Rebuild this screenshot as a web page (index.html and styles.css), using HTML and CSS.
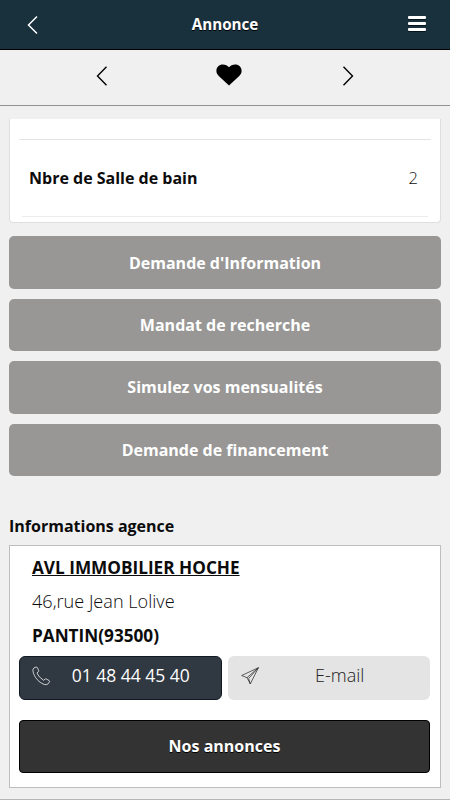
FILE: index.html
```html
<!DOCTYPE html>
<html lang="fr">
<head>
  <meta charset="UTF-8" />
  <meta name="viewport" content="width=device-width, initial-scale=1.0"/>
  <title>Annonce</title>
  <link rel="stylesheet" href="styles.css">
</head>
<body>
  <header class="header">
    <a class="back" href="#" aria-label="Retour">
      <svg width="12" height="20" viewBox="0 0 12 20"><path d="M10 1.5 L1.5 10 L10 18.5"/></svg>
    </a>
    <h1>Annonce</h1>
    <button class="menu" aria-label="Menu"><span></span><span></span><span></span></button>
  </header>

  <nav class="pager">
    <a href="#" aria-label="Annonce précédente">
      <svg width="12" height="20" viewBox="0 0 12 20"><path d="M10.5 0.7 L1.5 10 L10.5 19.3"/></svg>
    </a>
    <a class="heart" href="#" aria-label="Favori">
      <svg width="26" height="22" viewBox="0 0 26 22"><path d="M13 21.6 L3 12.2 C1 10.2 0.4 8.7 0.4 7 C0.4 3.1 3.2 0.5 6.8 0.5 C9.4 0.5 11.7 1.6 13 3.3 C14.3 1.6 16.6 0.5 19.2 0.5 C22.8 0.5 25.6 3.1 25.6 7 C25.6 8.7 25 10.2 23 12.2 Z"/></svg>
    </a>
    <a href="#" aria-label="Annonce suivante">
      <svg width="12" height="20" viewBox="0 0 12 20"><path d="M1.5 0.7 L10.5 10 L1.5 19.3"/></svg>
    </a>
  </nav>

  <main class="content">
    <section class="details">
      <div class="row">
        <span class="label">Nbre de Salle de bain</span>
        <span class="value">2</span>
      </div>
      <hr>
    </section>

    <div class="actions">
      <button class="action-btn">Demande d'Information</button>
      <button class="action-btn">Mandat de recherche</button>
      <button class="action-btn">Simulez vos mensualités</button>
      <button class="action-btn">Demande de financement</button>
    </div>

    <h2>Informations agence</h2>

    <section class="agency">
      <div class="address">
        <a class="name" href="#">AVL IMMOBILIER HOCHE</a>
        <span class="street">46,rue Jean Lolive</span>
        <span class="city">PANTIN(93500)</span>
      </div>
      <div class="contact">
        <a class="contact-btn phone" href="#">
          <svg width="19" height="20" viewBox="0 0 20 20"><path d="M2.2 1.4 L4.3 0.6 Q5.2 0.4 5.7 1.3 L7 4.1 Q7.3 5 6.6 5.6 L5.2 6.8 Q6.6 11 12.3 14.6 L13.7 13.3 Q14.4 12.8 15.2 13.2 L18 14.8 Q18.8 15.4 18.3 16.3 L17 18.2 Q15.7 19.5 13.5 19 C7.8 17.5 2.1 11.3 1 5 Q0.7 2.5 2.2 1.4 Z"/></svg>
          <span>01 48 44 45 40</span>
        </a>
        <a class="contact-btn mail" href="#">
          <svg width="18" height="18" viewBox="0 0 18 18"><path d="M17.4 0.7 L0.7 8.5 L6 10.7 L9.3 16.9 Z M17.4 0.7 L6 10.7 M17.4 0.7 L7.6 11.5 L9.3 16.9"/></svg>
          <span>E-mail</span>
        </a>
      </div>
      <button class="listings-btn">Nos annonces</button>
    </section>
  </main>
  <footer class="footer"></footer>
</body>
</html>
```
FILE: styles.css
```css
* {
  box-sizing: border-box;
}

body {
  margin: 0;
  height: 800px;
  display: flex;
  flex-direction: column;
  overflow: hidden;
  font-family: 'Open Sans', 'Noto Sans', sans-serif;
  background-color: #f0f0f0;
  color: #0c0c0c;
}

a {
  color: inherit;
  text-decoration: none;
}

button {
  font-family: inherit;
  cursor: pointer;
}

svg {
  display: block;
  fill: none;
  stroke: currentColor;
}

.header {
  display: grid;
  grid-template-columns: 60px 1fr 60px;
  align-items: center;
  height: 50px;
  flex: none;
  background-color: #19303d;
  border-bottom: 1px solid #000;
  color: white;
}

.header h1 {
  margin: 0 0 2px;
  font-size: 15.2px;
  font-weight: 700;
  line-height: 20px;
  text-align: center;
  text-shadow: 0 1px 0 #000;
}

.back {
  padding-left: 27px;
}

.back svg {
  stroke-width: 1.5;
}

.menu {
  display: flex;
  flex-direction: column;
  gap: 3px;
  width: 18px;
  margin: 0 0 3px 18px;
  padding: 0;
  border: none;
  background: none;
}

.menu span {
  height: 3px;
  border-radius: 1px;
  background-color: white;
  box-shadow: 0 1px 0 #07131a;
}

.pager {
  display: flex;
  justify-content: space-between;
  align-items: center;
  height: 56px;
  flex: none;
  padding: 0 96px 4px;
  border-bottom: 1px solid #919191;
  color: #000;
}

.pager svg {
  stroke-width: 1.4;
}

.pager .heart svg {
  fill: #000;
  stroke: none;
  margin: 0 0 2px 8px;
}

.content {
  padding: 13px 9px 0;
}

.details {
  height: 104px;
  padding: 20px 9px 0;
  background-color: white;
  border: 1px solid #dedede;
  border-top: none;
  border-radius: 0 0 4px 4px;
}

.row {
  display: flex;
  justify-content: space-between;
  align-items: center;
  height: 77px;
  padding: 0 13px 1px 10px;
  border-top: 1px solid #e4e4e4;
  font-size: 16px;
}

.details hr {
  margin: 0 3px;
  border: none;
  border-top: 1px solid #ececec;
}

.label {
  font-weight: 700;
}

.value {
  font-size: 16.5px;
  font-weight: 300;
}

.actions {
  display: flex;
  flex-direction: column;
  gap: 10px;
  margin-top: 13.4px;
}

.action-btn {
  height: 52.4px;
  padding: 0;
  border: none;
  border-radius: 5px;
  background-color: #989795;
  color: white;
  font-size: 16px;
  font-weight: 700;
}

h2 {
  margin: 40px 0 8px;
  font-size: 16px;
  font-weight: 700;
  line-height: 21px;
}

.agency {
  height: 243.5px;
  padding: 5px 10px 0 9px;
  background-color: white;
  border: 1px solid #bebebe;
}

.address {
  display: flex;
  flex-direction: column;
  align-items: flex-start;
  padding-left: 13px;
  font-size: 17.2px;
  line-height: 33.8px;
}

.name,
.city {
  font-weight: 700;
}

.name {
  text-decoration: underline;
}

.street {
  font-size: 18.1px;
  font-weight: 300;
}

.contact {
  display: grid;
  grid-template-columns: 1fr 1fr;
  gap: 6px;
  margin-top: 3.6px;
}

.contact-btn {
  display: grid;
  grid-template-columns: 20px 1fr;
  align-items: center;
  height: 44px;
  padding: 0 11px 3px 12px;
  border-radius: 6px;
  font-size: 18px;
}

.contact-btn span {
  padding-bottom: 2px;
  text-align: center;
}

.contact-btn svg {
  stroke-width: 0.8;
}

.phone {
  background-color: #303841;
  border: 1px solid #111a24;
  color: white;
  font-size: 17.5px;
}

.mail {
  padding-left: 13px;
  background-color: #e4e4e4;
  color: #222;
  font-weight: 300;
}

.mail svg {
  stroke-width: 0.7;
}

.listings-btn {
  width: 100%;
  height: 53px;
  margin-top: 20px;
  padding: 0;
  border: 1px solid #000;
  border-radius: 4px;
  background-color: #333;
  color: white;
  font-size: 16px;
  font-weight: 700;
  text-shadow: 0 1px 0 #000;
}

.footer {
  margin-top: auto;
  border-bottom: 1px solid #b5b5b5;
}
```
